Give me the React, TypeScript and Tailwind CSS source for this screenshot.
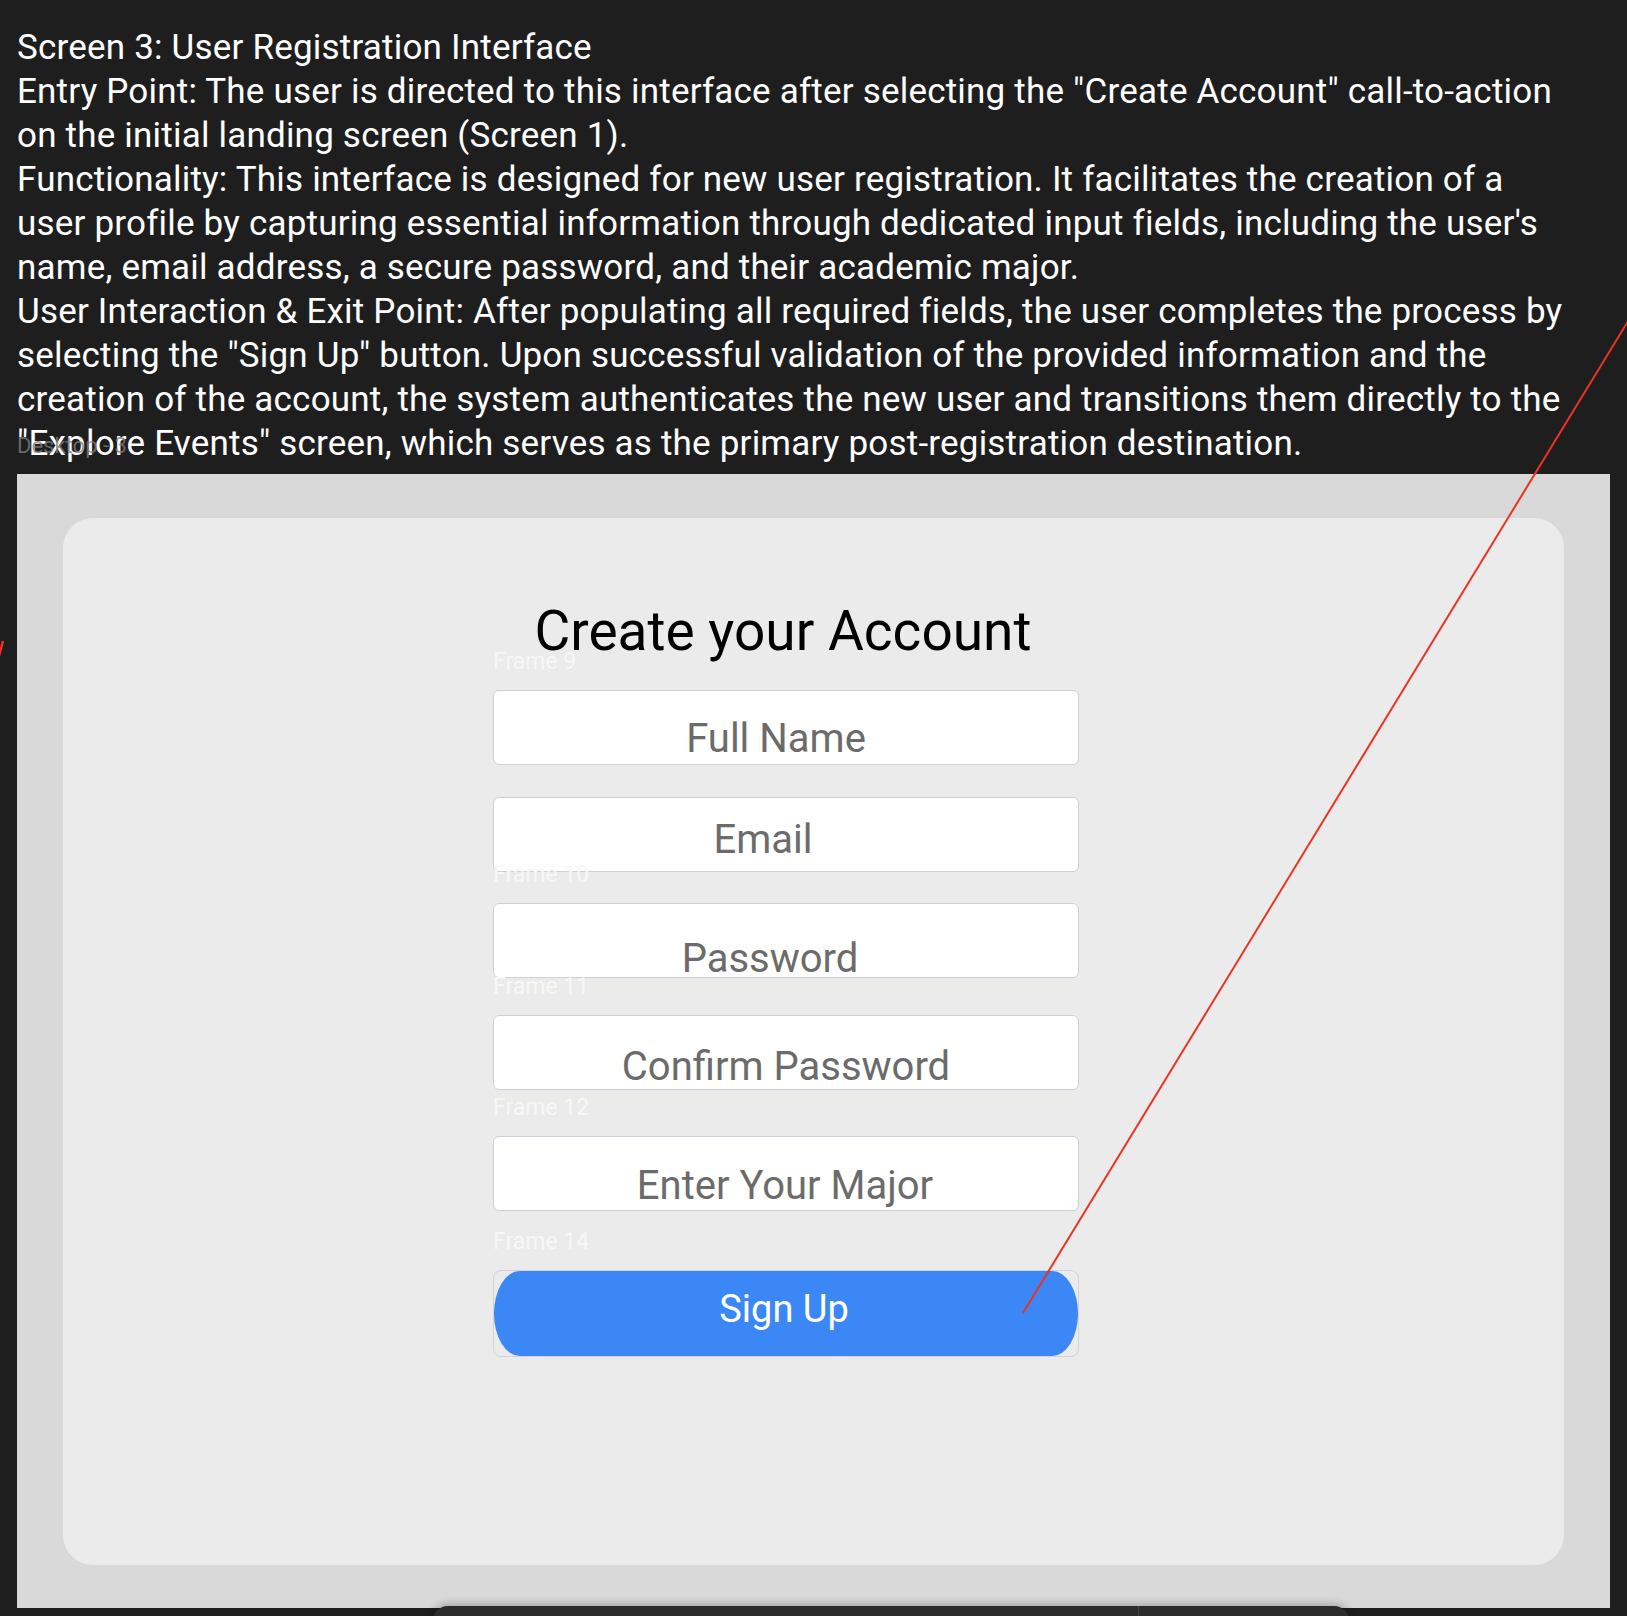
const lines = [
  "Screen 3: User Registration Interface",
  'Entry Point: The user is directed to this interface after selecting the "Create Account" call-to-action',
  "on the initial landing screen (Screen 1).",
  "Functionality: This interface is designed for new user registration. It facilitates the creation of a",
  "user profile by capturing essential information through dedicated input fields, including the user's",
  "name, email address, a secure password, and their academic major.",
  "User Interaction & Exit Point: After populating all required fields, the user completes the process by",
  'selecting the "Sign Up" button. Upon successful validation of the provided information and the',
  "creation of the account, the system authenticates the new user and transitions them directly to the",
  '"Explore Events" screen, which serves as the primary post-registration destination.',
];

function FrameLabel({ text }: { text: string }) {
  return (
    <span className="pointer-events-none absolute left-0 top-[-40px] text-[23px] leading-[24px] text-[#f7f7f7]">
      {text}
    </span>
  );
}

export default function App() {
  return (
    <div className="relative h-[1616px] w-[1627px] overflow-hidden bg-[#1e1e1e] font-[Roboto,sans-serif]">
      {/* description */}
      <div className="pl-[17px] pt-[26px] text-[35px] leading-[44px] tracking-[0.2px] text-white">
        {lines.map((l) => (
          <div key={l} className="whitespace-nowrap">
            {l}
          </div>
        ))}
      </div>

      {/* desktop frame */}
      <div className="relative ml-[17px] mt-[8px] h-[1134px] w-[1593px] bg-[#d9d9d9] pl-[46px] pt-[44px]">
        <span className="absolute left-0 top-[-40px] text-[22px] leading-[24px] text-[#7c7c7c]/80">
          Desktop - 3
        </span>

        <div className="h-[1047px] w-[1501px] rounded-[30px] bg-[#ebebeb] pl-[430px] pt-[81px]">
          <div className="flex w-[586px] flex-col">
            <h1 className="pr-[6px] text-center text-[55px] font-normal leading-[64px] text-black">
              Create your Account
            </h1>

            <div className="relative mt-[27px]">
              <FrameLabel text="Frame 9" />
              <div className="flex h-[75px] items-center justify-center rounded-[6px] border border-[#cfcfdc] bg-white pr-[20px] pt-[23px] text-[40px] text-[#6b6b6b]">
                Full Name
              </div>
            </div>

            <div className="relative mt-[32px]">
              <div className="flex h-[75px] items-center justify-center rounded-[6px] border border-[#cfcfdc] bg-white pr-[46px] pt-[11px] text-[40px] text-[#6b6b6b]">
                Email
              </div>
            </div>

            <div className="relative mt-[31px]">
              <FrameLabel text="Frame 10" />
              <div className="flex h-[75px] items-center justify-center rounded-[6px] border border-[#cfcfdc] bg-white pr-[32px] pt-[37px] text-[40px] text-[#6b6b6b]">
                Password
              </div>
            </div>

            <div className="relative mt-[37px]">
              <FrameLabel text="Frame 11" />
              <div className="flex h-[75px] items-center justify-center rounded-[6px] border border-[#cfcfdc] bg-white pt-[29px] text-[40px] text-[#6b6b6b]">
                Confirm Password
              </div>
            </div>

            <div className="relative mt-[46px]">
              <FrameLabel text="Frame 12" />
              <div className="flex h-[75px] items-center justify-center rounded-[6px] border border-[#cfcfdc] bg-white pr-[2px] pt-[25px] text-[40px] text-[#6b6b6b]">
                Enter Your Major
              </div>
            </div>

            <div className="relative mt-[59px]">
              <FrameLabel text="Frame 14" />
              <div className="h-[87px] rounded-[8px] border border-[#d2d2da]">
                <button
                  type="button"
                  className="flex h-full w-full items-center justify-center rounded-[26px/43px] bg-[#3b87f5] pb-[9px] pr-[4px] text-[38px] text-white"
                >
                  Sign Up
                </button>
              </div>
            </div>
          </div>
        </div>
      </div>

      {/* prototype connection */}
      <svg className="pointer-events-none absolute left-0 top-0" width="1627" height="1616">
        <line x1="1023" y1="1313" x2="1824" y2="0" stroke="#ea3323" strokeWidth="2" />
        <line x1="3" y1="641" x2="-1" y2="656" stroke="#ea3323" strokeWidth="2.5" />
      </svg>

      {/* bottom toolbar */}
      <div className="absolute left-[432px] top-[1606px] flex h-[40px] w-[918px] rounded-t-[16px] bg-[#2c2c2c] shadow-[0_-2px_8px_rgba(0,0,0,0.25)]">
        <div className="ml-[706px] h-full w-px bg-[#444]" />
      </div>
    </div>
  );
}
